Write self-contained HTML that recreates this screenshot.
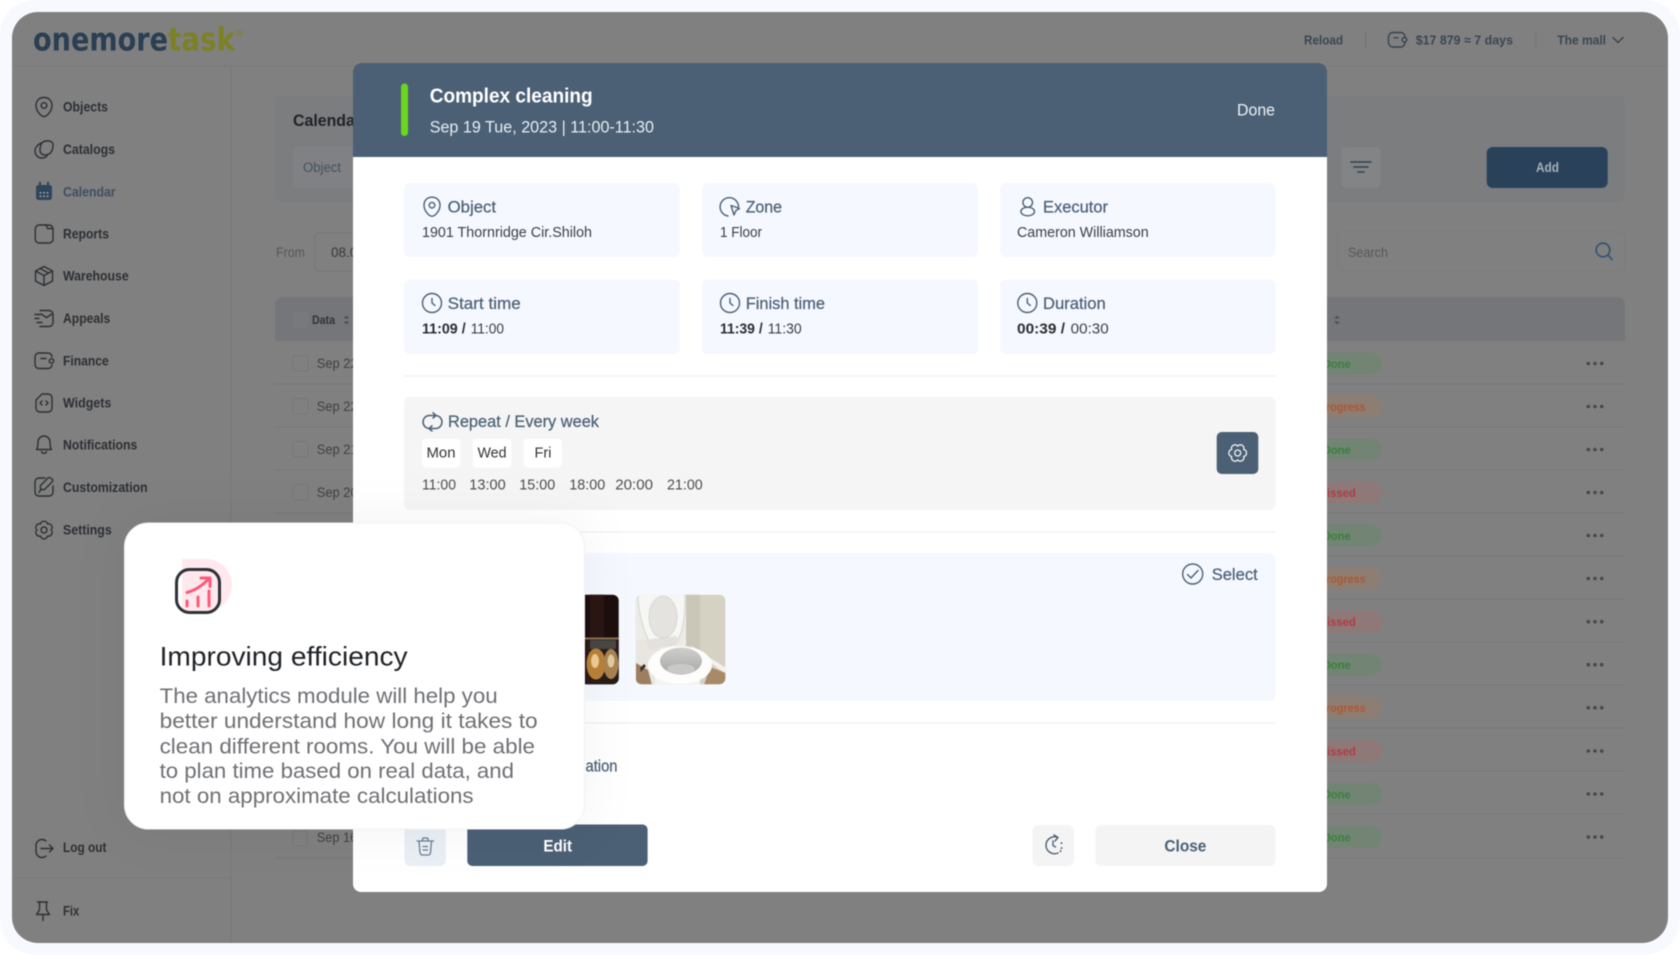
<!DOCTYPE html>
<html lang="en">
<head>
<meta charset="utf-8">
<title>onemoretask – Complex cleaning</title>
<style>
html,body{margin:0;padding:0;background:#fff;width:1680px;height:955px;overflow:hidden}
svg{display:block;filter:blur(.4px)}
text{font-family:"Liberation Sans",sans-serif}
.nav{font-size:13.5px;font-weight:700;fill:#2c2f33}
.top{font-size:13px;font-weight:700;fill:#3b4652}
.lab{font-size:16.5px;fill:#4b6075;stroke:#4b6075;stroke-width:.22}
.val{font-size:14.5px;fill:#3c4044}
.b{font-size:14.5px;font-weight:700;fill:#2b2e31}
.tm{font-size:14.5px;fill:#4a4d50}
.day{font-size:14.5px;fill:#333;text-anchor:middle}
.body{font-size:21.5px;fill:#6e7074}
.sep{font-size:14px;fill:#3e4144}
.d{font-size:12px;font-weight:700;fill:#3a7f3c;text-anchor:end}
.p{font-size:12px;font-weight:700;fill:#b0562f;text-anchor:end}
.m{font-size:12px;font-weight:700;fill:#b03c44;text-anchor:end}
.ic{fill:none;stroke:#2c2f33;stroke-width:1.4;stroke-linecap:round;stroke-linejoin:round}
.mi{fill:none;stroke:#4b6075;stroke-width:1.4;stroke-linecap:round;stroke-linejoin:round}
.line{stroke:#75777a;stroke-width:1}
.cb{fill:none;stroke:#75777a;stroke-width:1}
.dots{fill:#45484b}
.card{fill:#f5f8ff}
</style>
</head>
<body>
<svg width="1680" height="955" viewBox="0 0 1680 955" xmlns="http://www.w3.org/2000/svg">
<defs>
<path id="pin" d="M0-9.5C-5-9.5-8-6-8-1.5C-8 4-3 9.5 0 9.5C3 9.5 8 4 8-1.5C8-6 5-9.5 0-9.5ZM2.8-1.5A2.8 2.8 0 1 1-2.8-1.5A2.8 2.8 0 1 1 2.8-1.5Z"/>
<path id="gear" d="M7 0A3.6 3.6 0 0 1 3.5 6.06A3.6 3.6 0 0 1-3.5 6.06A3.6 3.6 0 0 1-7 0A3.6 3.6 0 0 1-3.5-6.06A3.6 3.6 0 0 1 3.5-6.06A3.6 3.6 0 0 1 7 0ZM3 0A3 3 0 1 1-3 0A3 3 0 1 1 3 0Z"/>
<g id="clock"><circle r="9.5"/><path d="M0-4.5V0L3 2.5"/></g>
<g id="dd"><circle cx="-6.7" r="1.8"/><circle r="1.8"/><circle cx="6.7" r="1.8"/></g>
<clipPath id="ph1"><rect x="540" y="594.7" width="78.7" height="89.6" rx="6"/></clipPath>
<clipPath id="ph2"><rect x="635.7" y="594.7" width="89.6" height="89.6" rx="6"/></clipPath>
<linearGradient id="bowl" x1="0" y1="0" x2="0" y2="1"><stop offset="0" stop-color="#cfcfcd"/><stop offset="1" stop-color="#a8a8a6"/></linearGradient>
</defs>

<rect width="1680" height="955" rx="35" fill="#f7f9ff"/>
<rect x="12" y="12" width="1656" height="931" rx="26" fill="#808080"/>
<path d="M12 66H1668" stroke="#7a7a7a"/>
<path d="M231 66V943" stroke="#77787a"/>
<path d="M12 878H231" stroke="#77797d"/>

<!-- logo -->
<text x="33" y="50.500" font-size="32" font-weight="700" fill="#2a3f52" style="font-family:'DejaVu Sans',sans-serif" textLength="135" lengthAdjust="spacingAndGlyphs">onemore</text>
<text x="168" y="50.500" font-size="32" font-weight="700" fill="#7c8124" style="font-family:'DejaVu Sans',sans-serif" textLength="67" lengthAdjust="spacingAndGlyphs">task</text>
<text x="236" y="37" font-size="10" fill="#7c8124">®</text>

<!-- top bar -->
<text class="top" x="1304" y="44.500" textLength="39" lengthAdjust="spacingAndGlyphs">Reload</text>
<path d="M1365.700 33V47M1535.700 33V47" stroke="#6f7275"/>
<g fill="none" stroke="#37424e" stroke-width="1.400" stroke-linecap="round">
<path d="M1405 36.500A4.500 4.500 0 0 0 1401 32.500H1393A4.500 4.500 0 0 0 1388.500 37V42.500A4.500 4.500 0 0 0 1393 47H1401A4.500 4.500 0 0 0 1405 43"/>
<circle cx="1404.500" cy="39.800" r="2.300"/><path d="M1394 37.800H1398"/>
<path d="M1613 37.500L1618 42.500L1623 37.500"/></g>
<text class="top" x="1415.700" y="44.500" textLength="97.300" lengthAdjust="spacingAndGlyphs">$17 879 ≈ 7 days</text>
<text class="top" x="1557.300" y="44.500" textLength="48.700" lengthAdjust="spacingAndGlyphs">The mall</text>

<!-- sidebar -->
<g>
<text class="nav" x="63" y="111.500" textLength="45" lengthAdjust="spacingAndGlyphs">Objects</text>
<text class="nav" x="63" y="154" textLength="52" lengthAdjust="spacingAndGlyphs">Catalogs</text>
<text class="nav" x="63" y="196.500" textLength="52.600" lengthAdjust="spacingAndGlyphs" style="fill:#3f4f60">Calendar</text>
<text class="nav" x="63" y="238.500" textLength="46" lengthAdjust="spacingAndGlyphs">Reports</text>
<text class="nav" x="63" y="280.500" textLength="65.700" lengthAdjust="spacingAndGlyphs">Warehouse</text>
<text class="nav" x="63" y="323" textLength="47.300" lengthAdjust="spacingAndGlyphs">Appeals</text>
<text class="nav" x="63" y="365.500" textLength="45.700" lengthAdjust="spacingAndGlyphs">Finance</text>
<text class="nav" x="63" y="407.500" textLength="48.300" lengthAdjust="spacingAndGlyphs">Widgets</text>
<text class="nav" x="63" y="449.500" textLength="74.300" lengthAdjust="spacingAndGlyphs">Notifications</text>
<text class="nav" x="63" y="492" textLength="84.700" lengthAdjust="spacingAndGlyphs">Customization</text>
<text class="nav" x="63" y="534.500" textLength="48.700" lengthAdjust="spacingAndGlyphs">Settings</text>
<text class="nav" x="63" y="852" textLength="43.400" lengthAdjust="spacingAndGlyphs">Log out</text>
<text class="nav" x="63" y="915.500" textLength="16.200" lengthAdjust="spacingAndGlyphs">Fix</text>
</g>
<g class="ic">
<use href="#pin" x="44" y="107"/>
<path d="M46 141h3a4 4 0 0 1 4 4c0 5-2 10-8 10c-3 0-5-2-5-5c0-5 2-9 6-9Z"/><path d="M41 143c-4 2-6 5-6 8c0 4 3 7 7 7c2 0 4-1 5-2"/>
<rect x="35.300" y="225" width="17.700" height="18" rx="4"/><path d="M45 225c1.500 0 2 1.500 2.500 3.500H53"/>
<path d="M44 266.500L52.500 271V281L44 285.500L35.500 281V271ZM35.500 271L44 275.500L52.500 271M44 275.500V285.500M40 268.500L48.500 273"/>
<path d="M40 310.500H49A4 4 0 0 1 53 314.500V322.500A4 4 0 0 1 49 326.500H40M41 314L46.500 317.500L52 314M35 314.500H40M35 318.500H39M37 322.500H42"/>
<path d="M52 357A4 4 0 0 0 48 353H39A4 4 0 0 0 35 357V364.500A4 4 0 0 0 39 368.500H48A4 4 0 0 0 52 365"/><circle cx="51.500" cy="361" r="2.200"/><path d="M41 358.500H46"/>
<path d="M42 394H48A4 4 0 0 1 52 398V408A4 4 0 0 1 48 412H40A4 4 0 0 1 36 408V400ZM42 401L40 403L42 405M46 401L48 403L46 405"/>
<path d="M36.500 449.500C38 447.500 38 445 38 442A6 6 0 0 1 50 442C50 445 50 447.500 51.500 449.500ZM41.500 451.500C42.500 454 45.500 454 46.500 451.500"/>
<path d="M45 478H39A4 4 0 0 0 35 482V492A4 4 0 0 0 39 496H49A4 4 0 0 0 53 492V486"/><path d="M52 479C53 480 53 481 52 482L45 489C44 490 42 490 41 489C40 488 40 486 41 485L48 478C49 477 51 478 52 479Z"/><path d="M41 489C40 491 39.500 492 39 492.500"/>
<use href="#gear" x="44" y="530"/>
<path d="M46 841C45 840 43 839.500 42 839.500A6 6 0 0 0 36 845.500V851.500A6 6 0 0 0 42 857.500C43 857.500 45 857 46 856M41 848.500H53M49.500 845L53 848.500L49.500 852"/>
<path d="M37.500 902H47.500M39.500 902V910L36.500 914.500H49.500L46.500 910V902M43 914.500V920.500"/>
</g>
<rect x="36" y="185" width="16" height="15" rx="2.500" fill="#2f4559"/>
<path d="M40 182.500V186M48 182.500V186" stroke="#2f4559" stroke-width="2" stroke-linecap="round"/>
<g fill="#8d97a1"><rect x="39.500" y="192" width="2" height="1.600"/><rect x="43" y="192" width="2" height="1.600"/><rect x="46.500" y="192" width="2" height="1.600"/><rect x="39.500" y="195.500" width="2" height="1.600"/><rect x="43" y="195.500" width="2" height="1.600"/><rect x="46.500" y="195.500" width="2" height="1.600"/></g>

<!-- content bg -->
<rect x="275" y="95" width="1350" height="108" rx="8" fill="#7b7d7f"/>
<text x="293" y="126" font-size="16.500" font-weight="700" fill="#1f2226" textLength="68" lengthAdjust="spacingAndGlyphs">Calendar</text>
<rect x="293" y="147" width="120" height="41" rx="6" fill="#7f8184"/>
<text x="303" y="172" font-size="13.500" fill="#44525f" textLength="38" lengthAdjust="spacingAndGlyphs">Object</text>
<rect x="1341" y="147" width="39.700" height="41" rx="6" fill="#828486"/>
<path d="M1351 162H1371M1354 167H1368M1358 172H1364" stroke="#33404e" stroke-width="1.600" stroke-linecap="round"/>
<rect x="1486.700" y="147" width="121" height="41" rx="6" fill="#294259"/>
<text x="1536" y="172" font-size="13.500" font-weight="700" fill="#a6b0ba" textLength="23" lengthAdjust="spacingAndGlyphs">Add</text>
<text x="276" y="257" font-size="13.500" fill="#55585b" textLength="29" lengthAdjust="spacingAndGlyphs">From</text>
<rect x="314.500" y="232.500" width="100" height="39" rx="6" fill="none" stroke="#75777a"/>
<text x="331" y="257" font-size="13.500" fill="#35393d">08.09</text>
<rect x="1337.700" y="231.500" width="287" height="40" rx="6" fill="none" stroke="#7a7c7f"/>
<text x="1348" y="257" font-size="13.500" fill="#55595e" textLength="40" lengthAdjust="spacingAndGlyphs">Search</text>
<circle cx="1603" cy="250" r="6.800" fill="none" stroke="#2f5273" stroke-width="1.600"/>
<path d="M1608 255L1612 259.500" stroke="#2f5273" stroke-width="1.600" stroke-linecap="round"/>

<path d="M275 305a8 8 0 0 1 8-8H1617a8 8 0 0 1 8 8V341H275Z" fill="#747679"/>
<rect x="293.500" y="313" width="14" height="14" rx="2" fill="#78797c" stroke="#7a7b7e"/>
<text x="312" y="324" font-size="11.500" font-weight="700" fill="#303337" textLength="23" lengthAdjust="spacingAndGlyphs">Data</text>
<path d="M343.500 318.500L346.500 315.500L349.500 318.500ZM343.500 321.500L346.500 324.500L349.500 321.500ZM1334 318.500L1337 315.500L1340 318.500ZM1334 321.500L1337 324.500L1340 321.500Z" fill="#4d5054"/>

<!-- rows -->
<g class="line"><path d="M275 384H1625M275 427H1625M275 470H1625M275 513H1625M275 556H1625M275 599H1625M275 642H1625M275 685H1625M275 728H1625M275 771H1625M275 814H1625M275 858H1625"/></g>
<g class="cb"><rect x="293" y="355.500" width="15" height="15.500" rx="2.500"/><rect x="293" y="398.500" width="15" height="15.500" rx="2.500"/><rect x="293" y="441.500" width="15" height="15.500" rx="2.500"/><rect x="293" y="484.500" width="15" height="15.500" rx="2.500"/><rect x="293" y="831" width="14.500" height="15" rx="2.500"/></g>
<text class="sep" x="316.700" y="368" textLength="41" lengthAdjust="spacingAndGlyphs">Sep 22</text>
<text class="sep" x="316.700" y="411" textLength="41" lengthAdjust="spacingAndGlyphs">Sep 22</text>
<text class="sep" x="316.700" y="454" textLength="41" lengthAdjust="spacingAndGlyphs">Sep 21</text>
<text class="sep" x="316.700" y="497" textLength="41" lengthAdjust="spacingAndGlyphs">Sep 20</text>
<text class="sep" x="316.700" y="842" textLength="40.500" lengthAdjust="spacingAndGlyphs">Sep 16</text>

<g>
<g fill="#728574"><rect x="1290" y="352.500" width="92.300" height="22" rx="11"/><rect x="1290" y="438.500" width="92.300" height="22" rx="11"/><rect x="1290" y="524.500" width="92.300" height="22" rx="11"/><rect x="1290" y="653.500" width="92.300" height="22" rx="11"/><rect x="1290" y="783" width="92.300" height="22" rx="11"/><rect x="1290" y="826" width="92.300" height="22" rx="11"/></g>
<g fill="#8d7e73"><rect x="1290" y="395.500" width="92.300" height="22" rx="11"/><rect x="1290" y="567.500" width="92.300" height="22" rx="11"/><rect x="1290" y="696.500" width="92.300" height="22" rx="11"/></g>
<g fill="#8f7878"><rect x="1290" y="481.500" width="92.300" height="22" rx="11"/><rect x="1290" y="610.500" width="92.300" height="22" rx="11"/><rect x="1290" y="740" width="92.300" height="22" rx="11"/></g>
<text class="d" x="1350.700" y="367.800" textLength="28" lengthAdjust="spacingAndGlyphs">Done</text>
<text class="p" x="1365.700" y="410.800" textLength="47" lengthAdjust="spacingAndGlyphs">Progress</text>
<text class="d" x="1350.700" y="453.800" textLength="28" lengthAdjust="spacingAndGlyphs">Done</text>
<text class="m" x="1355.700" y="496.800" textLength="38" lengthAdjust="spacingAndGlyphs">Missed</text>
<text class="d" x="1350.700" y="539.800" textLength="28" lengthAdjust="spacingAndGlyphs">Done</text>
<text class="p" x="1365.700" y="582.800" textLength="47" lengthAdjust="spacingAndGlyphs">Progress</text>
<text class="m" x="1355.700" y="626" textLength="38" lengthAdjust="spacingAndGlyphs">Missed</text>
<text class="d" x="1350.700" y="669" textLength="28" lengthAdjust="spacingAndGlyphs">Done</text>
<text class="p" x="1365.700" y="712" textLength="47" lengthAdjust="spacingAndGlyphs">Progress</text>
<text class="m" x="1355.700" y="755.300" textLength="38" lengthAdjust="spacingAndGlyphs">Missed</text>
<text class="d" x="1350.700" y="798.300" textLength="28" lengthAdjust="spacingAndGlyphs">Done</text>
<text class="d" x="1350.700" y="841.300" textLength="28" lengthAdjust="spacingAndGlyphs">Done</text>
</g>
<g class="dots"><use href="#dd" x="1595" y="363.500"/><use href="#dd" x="1595" y="406.500"/><use href="#dd" x="1595" y="449.500"/><use href="#dd" x="1595" y="492.500"/><use href="#dd" x="1595" y="535.500"/><use href="#dd" x="1595" y="578.500"/><use href="#dd" x="1595" y="621.700"/><use href="#dd" x="1595" y="664.700"/><use href="#dd" x="1595" y="707.700"/><use href="#dd" x="1595" y="751"/><use href="#dd" x="1595" y="794"/><use href="#dd" x="1595" y="837"/></g>

<!-- modal -->
<rect x="353" y="63" width="974" height="829" rx="8" fill="#fff"/>
<path d="M353 157V71a8 8 0 0 1 8-8H1319a8 8 0 0 1 8 8V157Z" fill="#4b6075"/>
<rect x="401" y="83.500" width="7" height="52.500" rx="3.500" fill="#6bd61f"/>
<text x="429.700" y="102.500" font-size="20" font-weight="700" fill="#fff" textLength="163" lengthAdjust="spacingAndGlyphs">Complex cleaning</text>
<text x="429.700" y="132.700" font-size="16.500" fill="#e8edf2" textLength="224.300" lengthAdjust="spacingAndGlyphs">Sep 19 Tue, 2023 | 11:00-11:30</text>
<text x="1237" y="115.700" font-size="16.500" fill="#eef1f5" textLength="38" lengthAdjust="spacingAndGlyphs">Done</text>

<rect class="card" x="404" y="183" width="276" height="74" rx="6"/>
<rect class="card" x="702" y="183" width="276" height="74" rx="6"/>
<rect class="card" x="1000" y="183" width="275.600" height="74" rx="6"/>
<rect class="card" x="404" y="279.500" width="276" height="74.500" rx="6"/>
<rect class="card" x="702" y="279.500" width="276" height="74.500" rx="6"/>
<rect class="card" x="1000" y="279.500" width="275.600" height="74.500" rx="6"/>

<text class="lab" x="447.700" y="212.700" textLength="48.300" lengthAdjust="spacingAndGlyphs">Object</text>
<text class="val" x="422" y="237" textLength="170" lengthAdjust="spacingAndGlyphs">1901 Thornridge Cir.Shiloh</text>
<text class="lab" x="745.700" y="212.700" textLength="36.300" lengthAdjust="spacingAndGlyphs">Zone</text>
<text class="val" x="720" y="237" textLength="42" lengthAdjust="spacingAndGlyphs">1 Floor</text>
<text class="lab" x="1043" y="212.700" textLength="65" lengthAdjust="spacingAndGlyphs">Executor</text>
<text class="val" x="1017" y="237" textLength="131.700" lengthAdjust="spacingAndGlyphs">Cameron Williamson</text>

<text class="lab" x="447.700" y="309" textLength="73" lengthAdjust="spacingAndGlyphs">Start time</text>
<text class="b" x="422" y="333.700" textLength="43.700" lengthAdjust="spacingAndGlyphs">11:09 /</text>
<text class="val" x="470.700" y="333.700" textLength="33.300" lengthAdjust="spacingAndGlyphs">11:00</text>
<text class="lab" x="745.700" y="309" textLength="79.300" lengthAdjust="spacingAndGlyphs">Finish time</text>
<text class="b" x="720" y="333.700" textLength="42.700" lengthAdjust="spacingAndGlyphs">11:39 /</text>
<text class="val" x="767.700" y="333.700" textLength="34" lengthAdjust="spacingAndGlyphs">11:30</text>
<text class="lab" x="1043" y="309" textLength="62.700" lengthAdjust="spacingAndGlyphs">Duration</text>
<text class="b" x="1017" y="333.700" textLength="48" lengthAdjust="spacingAndGlyphs">00:39 /</text>
<text class="val" x="1070.700" y="333.700" textLength="38" lengthAdjust="spacingAndGlyphs">00:30</text>

<g class="mi">
<use href="#pin" x="432" y="206.700"/>
<path d="M738.500 207A9.200 9.200 0 1 0 728 216"/><path d="M731 205.500L739.500 208.500L736 210.500L734 215Z"/>
<circle cx="1027.700" cy="202.500" r="4.800"/><ellipse cx="1027.700" cy="211.500" rx="6.800" ry="4.300"/>
<use href="#clock" x="432" y="303"/><use href="#clock" x="730" y="303"/><use href="#clock" x="1027.300" y="303"/>
</g>

<path d="M404 376H1275.600M404 532H1275.600M404 723H1275.600" stroke="#eef0f5" stroke-width="1.300"/>

<rect x="404" y="397" width="871.600" height="113" rx="6" fill="#f5f5f5"/>
<g class="mi" style="stroke-width:1.500">
<path d="M436 415.500H429A6.500 6.500 0 0 0 428 428.300M429 428.500H436A6.500 6.500 0 0 0 437 415.700"/>
<path d="M433 412.800L436 415.500L433 418M432 425.800L429 428.500L432 431"/>
</g>
<text class="lab" x="448" y="427" textLength="151" lengthAdjust="spacingAndGlyphs">Repeat / Every week</text>
<g fill="#fff"><rect x="422" y="438.700" width="38.300" height="29" rx="4"/><rect x="472.700" y="438.700" width="38.700" height="29" rx="4"/><rect x="523.700" y="438.700" width="38.300" height="29" rx="4"/></g>
<text class="day" x="441" y="457.700" textLength="29" lengthAdjust="spacingAndGlyphs">Mon</text>
<text class="day" x="492" y="457.700" textLength="29" lengthAdjust="spacingAndGlyphs">Wed</text>
<text class="day" x="543" y="457.700">Fri</text>
<text class="tm" x="422" y="489.300" textLength="34" lengthAdjust="spacingAndGlyphs">11:00</text>
<text class="tm" x="469.300" y="489.300" textLength="36.400" lengthAdjust="spacingAndGlyphs">13:00</text>
<text class="tm" x="519.300" y="489.300" textLength="36" lengthAdjust="spacingAndGlyphs">15:00</text>
<text class="tm" x="569.300" y="489.300" textLength="36" lengthAdjust="spacingAndGlyphs">18:00</text>
<text class="tm" x="615.300" y="489.300" textLength="37.700" lengthAdjust="spacingAndGlyphs">20:00</text>
<text class="tm" x="667" y="489.300" textLength="35.700" lengthAdjust="spacingAndGlyphs">21:00</text>
<rect x="1216.700" y="432" width="41.600" height="42" rx="5" fill="#4b6075"/>
<use href="#gear" transform="translate(1237.700 453) rotate(30)" fill="none" stroke="#eef1f5" stroke-width="1.300"/>

<rect class="card" x="404" y="553" width="871.600" height="148" rx="6"/>
<circle cx="1192.700" cy="574" r="10" class="mi"/>
<path d="M1187.500 574.500L1191 578L1198 570.500" class="mi"/>
<text class="lab" x="1211.700" y="580" textLength="46" lengthAdjust="spacingAndGlyphs">Select</text>

<!-- dark photo -->
<g clip-path="url(#ph1)">
<rect x="540" y="594" width="80" height="91" fill="#1d0f0d"/>
<rect x="590" y="594" width="14" height="44" fill="#2a1714"/>
<rect x="540" y="637.500" width="80" height="2" fill="#8f7050"/>
<rect x="586" y="640" width="33" height="45" fill="#2a1c17"/>
<rect x="590" y="640" width="26" height="9" fill="#4a4644"/>
<ellipse cx="596" cy="664" rx="9.500" ry="15.500" fill="#b98238"/>
<ellipse cx="595" cy="661" rx="4" ry="7" fill="#eecb96"/>
<ellipse cx="611" cy="664" rx="7.500" ry="15" fill="#a88450"/>
<ellipse cx="611" cy="661" rx="3.500" ry="6.500" fill="#e0c9a4"/>
</g>
<!-- toilet photo -->
<g clip-path="url(#ph2)">
<rect x="635.700" y="594.700" width="90" height="90" fill="#d5d1c3"/>
<path d="M636 594H686V650H636Z" fill="#ecebe4"/>
<path d="M686 594H700V650H686Z" fill="#cbc7b8"/>
<path d="M636 640H660V685H636Z" fill="#e8e6de"/>
<path d="M636 663L648 670L652 685H636Z" fill="#9c7f60"/>
<path d="M640 668L644 664L646 666L641 672Z" fill="#3a3530"/>
<path d="M690 645L726 668V674L700 655Z" fill="#f3f2ec"/>
<path d="M710 667L726 673V685H704Z" fill="#a88a68"/>
<path d="M638 594H685C685 615 684 630 676 644L652 648C643 630 638 612 638 594Z" fill="#f6f6f4" stroke="#cfcfcb" stroke-width=".8"/>
<path d="M645 640L676 636L680 642L650 650Z" fill="#e2e1dd"/>
<ellipse cx="663" cy="617" rx="14" ry="21" fill="#e4e3e0" stroke="#d2d2ce" stroke-width=".8"/>
<path d="M655 670H700V685H655Z" fill="#f4f4f2"/>
<ellipse cx="680" cy="665" rx="32" ry="19" fill="#fdfdfc"/>
<ellipse cx="681" cy="661" rx="21" ry="13.500" fill="url(#bowl)"/>
<ellipse cx="681" cy="669" rx="14" ry="5" fill="#c9c9c7"/>
</g>

<text class="lab" x="585.500" y="771.700" textLength="32" lengthAdjust="spacingAndGlyphs">ation</text>

<!-- footer -->
<rect x="404.500" y="825" width="41.300" height="41" rx="6" fill="#eaeff6"/>
<g fill="none" stroke="#6a7d91" stroke-width="1.300" stroke-linecap="round" stroke-linejoin="round"><path d="M417 841H433.500M422 841L423 838H427.500L428.500 841M419 841L420 852.500A2.500 2.500 0 0 0 422.500 855H428A2.500 2.500 0 0 0 430.500 852.500L431.500 841M423 846.500H427.500M423 850H427.500"/></g>
<rect x="467.300" y="824.500" width="180.300" height="41.500" rx="5" fill="#4b6075"/>
<text x="543.400" y="851.500" font-size="16.500" font-weight="700" fill="#fff" textLength="28.600" lengthAdjust="spacingAndGlyphs">Edit</text>
<rect x="1032.500" y="825" width="41.400" height="41" rx="6" fill="#f4f4f4"/>
<g class="mi"><path d="M1058 837.500A8.500 8.500 0 1 0 1058 853M1054 835L1058 837.500L1055 841M1053 841V845.500L1055.500 847"/><path d="M1061.500 843V843.200M1061.500 848V848.200M1060.500 851V851.200" stroke-width="1.800"/></g>
<rect x="1095.400" y="825" width="180" height="41" rx="6" fill="#f4f4f4"/>
<text x="1164.400" y="851.500" font-size="16.500" font-weight="700" fill="#4b6075" textLength="42" lengthAdjust="spacingAndGlyphs">Close</text>

<!-- tooltip -->
<rect x="124.500" y="523" width="460" height="306" rx="24" fill="#fff" stroke="#f2f2f2" style="filter:drop-shadow(0 0 26px rgba(0,0,0,.05))"/>
<path d="M182 559H206A26 26 0 0 1 206 611H182Z" fill="#ffe9ee"/>
<rect x="176.500" y="569.500" width="43" height="43" rx="13" fill="none" stroke="#2e3236" stroke-width="3"/>
<g fill="none" stroke="#ff5a78" stroke-width="3" stroke-linecap="round" stroke-linejoin="round">
<path d="M187 592.500C196 590 203 585 209 578.500M201 578H210V586.500"/>
<path d="M187 601V606M198 597V606M209 591V606"/></g>
<text x="159.600" y="665.700" font-size="27" fill="#1f2226" textLength="248" lengthAdjust="spacingAndGlyphs">Improving efficiency</text>
<text class="body" x="159.600" y="703" textLength="338" lengthAdjust="spacingAndGlyphs">The analytics module will help you</text>
<text class="body" x="159.600" y="728" textLength="378" lengthAdjust="spacingAndGlyphs">better understand how long it takes to</text>
<text class="body" x="159.600" y="753.300" textLength="375.400" lengthAdjust="spacingAndGlyphs">clean different rooms. You will be able</text>
<text class="body" x="159.600" y="778" textLength="354.400" lengthAdjust="spacingAndGlyphs">to plan time based on real data, and</text>
<text class="body" x="159.600" y="803" textLength="314" lengthAdjust="spacingAndGlyphs">not on approximate calculations</text>
</svg>
</body>
</html>
